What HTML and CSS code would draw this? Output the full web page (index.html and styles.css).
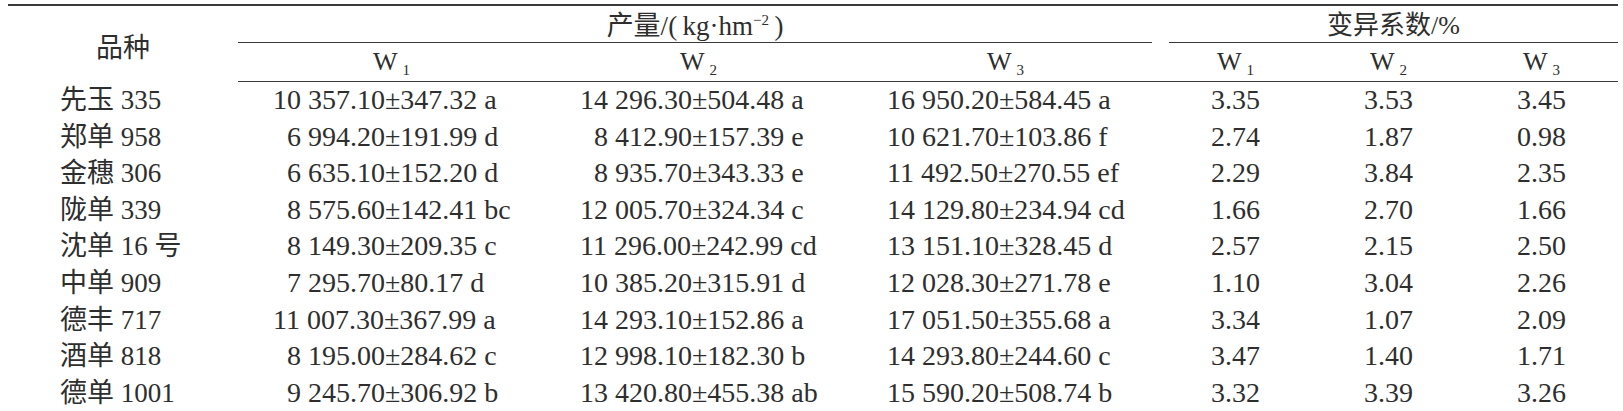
FILE: index.html
```html
<!DOCTYPE html>
<html lang="zh">
<head>
    <meta charset="UTF-8">
    <title>品种产量与变异系数</title>
    <link rel="stylesheet" href="styles.css">
</head>
<body>
    <table class="data">
        <colgroup>
            <col class="c-name">
            <col class="c-yield"><col class="c-yield"><col class="c-yield">
            <col class="c-cv"><col class="c-cv"><col class="c-cv">
        </colgroup>
        <thead>
            <tr class="group-row">
                <th rowspan="2" class="variety">品种</th>
                <th colspan="3" class="group"><div class="rule rule-yield">产量/(&thinsp;kg·hm<sup>−2</sup>&thinsp;)</div></th>
                <th colspan="3" class="group"><div class="rule rule-cv">变异系数/%</div></th>
            </tr>
            <tr class="sub-row">
                <th>W<sub>1</sub></th>
                <th>W<sub>2</sub></th>
                <th>W<sub>3</sub></th>
                <th>W<sub>1</sub></th>
                <th>W<sub>2</sub></th>
                <th>W<sub>3</sub></th>
            </tr>
        </thead>
        <tbody>
            <tr>
                <td class="name">先玉 335</td>
                <td class="num">10 357.10±347.32 a</td>
                <td class="num">14 296.30±504.48 a</td>
                <td class="num">16 950.20±584.45 a</td>
                <td class="cv">3.35</td><td class="cv">3.53</td><td class="cv">3.45</td>
            </tr>
            <tr>
                <td class="name">郑单 958</td>
                <td class="num sh">6 994.20±191.99 d</td>
                <td class="num sh">8 412.90±157.39 e</td>
                <td class="num">10 621.70±103.86 f</td>
                <td class="cv">2.74</td><td class="cv">1.87</td><td class="cv">0.98</td>
            </tr>
            <tr>
                <td class="name">金穗 306</td>
                <td class="num sh">6 635.10±152.20 d</td>
                <td class="num sh">8 935.70±343.33 e</td>
                <td class="num">11 492.50±270.55 ef</td>
                <td class="cv">2.29</td><td class="cv">3.84</td><td class="cv">2.35</td>
            </tr>
            <tr>
                <td class="name">陇单 339</td>
                <td class="num sh">8 575.60±142.41 bc</td>
                <td class="num">12 005.70±324.34 c</td>
                <td class="num">14 129.80±234.94 cd</td>
                <td class="cv">1.66</td><td class="cv">2.70</td><td class="cv">1.66</td>
            </tr>
            <tr>
                <td class="name">沈单 16 号</td>
                <td class="num sh">8 149.30±209.35 c</td>
                <td class="num">11 296.00±242.99 cd</td>
                <td class="num">13 151.10±328.45 d</td>
                <td class="cv">2.57</td><td class="cv">2.15</td><td class="cv">2.50</td>
            </tr>
            <tr>
                <td class="name">中单 909</td>
                <td class="num sh">7 295.70±80.17 d</td>
                <td class="num">10 385.20±315.91 d</td>
                <td class="num">12 028.30±271.78 e</td>
                <td class="cv">1.10</td><td class="cv">3.04</td><td class="cv">2.26</td>
            </tr>
            <tr>
                <td class="name">德丰 717</td>
                <td class="num">11 007.30±367.99 a</td>
                <td class="num">14 293.10±152.86 a</td>
                <td class="num">17 051.50±355.68 a</td>
                <td class="cv">3.34</td><td class="cv">1.07</td><td class="cv">2.09</td>
            </tr>
            <tr>
                <td class="name">酒单 818</td>
                <td class="num sh">8 195.00±284.62 c</td>
                <td class="num">12 998.10±182.30 b</td>
                <td class="num">14 293.80±244.60 c</td>
                <td class="cv">3.47</td><td class="cv">1.40</td><td class="cv">1.71</td>
            </tr>
            <tr>
                <td class="name">德单 1001</td>
                <td class="num sh">9 245.70±306.92 b</td>
                <td class="num">13 420.80±455.38 ab</td>
                <td class="num">15 590.20±508.74 b</td>
                <td class="cv">3.32</td><td class="cv">3.39</td><td class="cv">3.26</td>
            </tr>
        </tbody>
    </table>
</body>
</html>
```

FILE: styles.css
```css
body {
    margin: 4px 5px 0 8px;
    background: #fff;
    color: #2e2e2e;
    font-family: "Liberation Serif", "Noto Sans CJK SC", serif;
}
.data {
    width: 1610px;
    table-layout: fixed;
    border-collapse: collapse;
    border-top: 2px solid #3a3a3a;
    border-bottom: 2px solid #3a3a3a;
}
.c-name {
    width: 230px;
}
.c-yield {
    width: 307px;
}
.c-cv {
    width: 153px;
}
th {
    font-weight: normal;
    padding: 0;
    font-size: 26px;
}
.variety {
    font-size: 27px;
    vertical-align: middle;
    padding-top: 4px;
}
.group {
    vertical-align: bottom;
}
.rule {
    height: 36px;
    line-height: 40px;
    border-bottom: 1px solid #3a3a3a;
}
.rule-yield {
    margin-right: 7px;
    font-size: 27px;
}
.rule-cv {
    margin-left: 10px;
}
.rule sup {
    font-size: 15px;
    line-height: 0;
    vertical-align: 10px;
}
.sub-row th {
    height: 36px;
    line-height: 38px;
    font-size: 26px;
    border-bottom: 1px solid #3a3a3a;
}
.sub-row sub {
    font-size: 15px;
    line-height: 0;
    vertical-align: -5px;
    margin-left: 5px;
}
td {
    padding: 0;
    height: 36.6px;
    line-height: 36.6px;
    font-size: 28px;
    white-space: nowrap;
}
.name {
    padding-left: 52px;
    font-size: 27px;
}
.num {
    padding-left: 35px;
}
.num.sh {
    padding-left: 49px;
}
.cv {
    text-align: center;
}
```
